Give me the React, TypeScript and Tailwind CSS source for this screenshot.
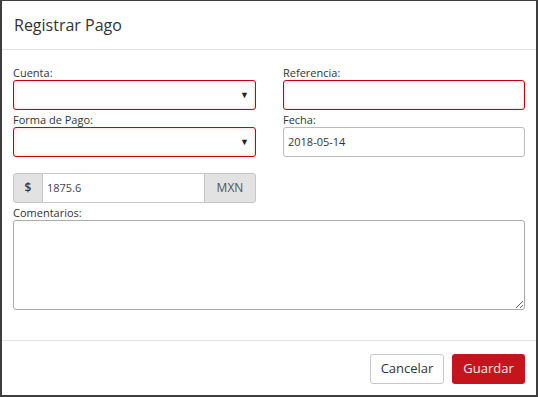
import React from 'react';

const font = { fontFamily: '"Open Sans", "Noto Sans", sans-serif' };

function Label({ children }: { children: React.ReactNode }) {
  return <label className="flex h-[17px] items-end pb-[2px] text-[11px] leading-none text-[#333]">{children}</label>;
}

function ErrorSelect() {
  return (
    <div className="relative h-[30px] rounded-[3px] border border-[#c40010] bg-white shadow-[inset_0_0_4px_rgba(200,0,20,0.18)]">
      <span className="absolute right-[6px] top-[9px] text-[9px] leading-none text-[#222]">▼</span>
    </div>
  );
}

export default function App() {
  return (
    <div style={font} className="flex h-[397px] w-[538px] flex-col border-x-2 border-b-2 border-t border-[#3e3e3e] bg-white text-[#333]">
      <div className="flex h-[49px] shrink-0 items-center border-b border-[#e2e2e2] px-[12px]">
        <h1 className="text-[16px] font-normal text-[#333]">Registrar Pago</h1>
      </div>

      <div className="flex flex-1 flex-col px-[11px] pt-[13px]">
        <div className="grid grid-cols-[243px_242px] gap-x-[27px]">
          <div>
            <Label>Cuenta:</Label>
            <ErrorSelect />
          </div>
          <div>
            <Label>Referencia:</Label>
            <div className="h-[30px] rounded-[3px] border border-[#c40010] bg-white shadow-[inset_0_0_4px_rgba(200,0,20,0.18)]" />
          </div>
          <div>
            <Label>Forma de Pago:</Label>
            <ErrorSelect />
          </div>
          <div>
            <Label>Fecha:</Label>
            <div className="flex h-[30px] items-center rounded-[3px] border border-[#bbb] bg-white px-[4px] text-[11px] text-[#333]">
              2018-05-14
            </div>
          </div>
        </div>

        <div className="mt-[16px] flex h-[30px] w-[243px]">
          <div className="flex w-[30px] items-center justify-center rounded-l-[3px] border border-[#c6c6c6] bg-[#e2e2e2] text-[12px] font-semibold text-[#3a3a3a]">
            $
          </div>
          <div className="flex flex-1 items-center border-y border-[#c6c6c6] bg-white px-[4px] text-[11px] text-[#444]">1875.6</div>
          <div className="flex w-[52px] items-center justify-center rounded-r-[3px] border border-[#c6c6c6] bg-[#e2e2e2] text-[12px] text-[#555]">
            MXN
          </div>
        </div>

        <Label>Comentarios:</Label>
        <textarea className="h-[90px] w-full rounded-[3px] border border-[#aaa] bg-white outline-none" />
      </div>

      <div className="flex h-[55px] shrink-0 items-start justify-end gap-[8px] border-t border-[#e2e2e2] px-[11px] pt-[13px]">
        <button className="h-[30px] w-[74px] rounded-[3px] border border-[#c8c8c8] bg-white text-[13px] text-[#333]">Cancelar</button>
        <button className="h-[30px] w-[73px] rounded-[3px] bg-[#c4151c] text-[13px] text-[#fbe9e9]">Guardar</button>
      </div>
    </div>
  );
}
